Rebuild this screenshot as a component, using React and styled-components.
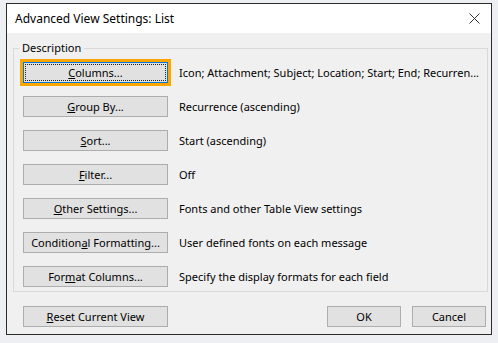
import React from 'react';
import styled, { createGlobalStyle } from 'styled-components';

const GlobalStyle = createGlobalStyle`
  body {
    margin: 0;
    background: #edeff3;
    font-family: "Noto Sans", "Open Sans", sans-serif;
    font-size: 11px;
    color: #000;
  }
`;

const rows = [
    { label: 'Columns', key: 'C', rest: 'olumns...', desc: 'Icon; Attachment; Subject; Location; Start; End; Recurren...', focused: true },
    { label: 'Group By', key: 'G', rest: 'roup By...', desc: 'Recurrence (ascending)' },
    { label: 'Sort', key: 'S', rest: 'ort...', desc: 'Start (ascending)' },
    { label: 'Filter', key: 'F', rest: 'ilter...', desc: 'Off' },
    { label: 'Other Settings', key: 'O', rest: 'ther Settings...', desc: 'Fonts and other Table View settings' },
    { label: 'Conditional Formatting', pre: 'Condition', key: 'a', rest: 'l Formatting...', desc: 'User defined fonts on each message' },
    { label: 'Format Columns', pre: 'For', key: 'm', rest: 'at Columns...', desc: 'Specify the display formats for each field' },
];

const CloseIcon = () => (
    <svg width="11" height="11" viewBox="0 0 11 11">
        <path d="M0.5 0.5 L10.5 10.5 M10.5 0.5 L0.5 10.5" stroke="#333" strokeWidth="1" fill="none" />
    </svg>
);

const App = () => {
    return (
        <Page>
            <GlobalStyle />
            <Dialog>
                <TitleBar>
                    <Title>Advanced View Settings: List</Title>
                    <CloseButton>
                        <CloseIcon />
                    </CloseButton>
                </TitleBar>
                <Body>
                    <Group>
                        <Legend>Description</Legend>
                        {rows.map(row => {
                            const label = (
                                <>
                                    {row.pre}
                                    <u>{row.key}</u>
                                    {row.rest}
                                </>
                            );
                            return (
                                <Row key={row.label}>
                                    <Button focused={row.focused}>
                                        {row.focused ? <FocusRect>{label}</FocusRect> : label}
                                    </Button>
                                    <Desc>{row.desc}</Desc>
                                </Row>
                            );
                        })}
                    </Group>
                    <Footer>
                        <Button>
                            <u>R</u>eset Current View
                        </Button>
                        <Actions>
                            <Button small>OK</Button>
                            <Button small>Cancel</Button>
                        </Actions>
                    </Footer>
                </Body>
            </Dialog>
        </Page>
    );
};

export default App;

const Page = styled.div`
  padding: 3px 0 0 6px;
`;

const Dialog = styled.div`
  width: 486px;
  height: 332px;
  box-sizing: border-box;
  border: 1px solid #2b2b2b;
  background: #f0f0f0;
  display: flex;
  flex-direction: column;
  overflow: hidden;
`;

const TitleBar = styled.div`
  height: 29px;
  flex-shrink: 0;
  background: #fff;
  display: flex;
  align-items: center;
  justify-content: space-between;
  padding: 0 8px 0 8px;
`;

const Title = styled.span`
  font-size: 12px;
  color: #000;
`;

const CloseButton = styled.div`
  width: 11px;
  height: 11px;
  margin-right: 3px;
  display: flex;
`;

const Body = styled.div`
  flex: 1;
  padding: 7px 4px 0 6px;
`;

const Group = styled.fieldset`
  margin: 0;
  width: 475px;
  min-width: 0;
  box-sizing: border-box;
  border: 1px solid #d9d9d9;
  padding: 6px 0 4px 9px;
  display: flex;
  flex-direction: column;
  gap: 13px;
`;

const Legend = styled.legend`
  margin-left: -4px;
  padding: 0 3px;
  line-height: 16px;
  font-size: 11px;
`;

const Row = styled.div`
  display: flex;
  align-items: center;
  gap: 11px;
`;

const Button = styled.div`
  width: ${p => (p.small ? '74px' : '145px')};
  height: 21px;
  box-sizing: border-box;
  background: #e1e1e1;
  border: 1px solid ${p => (p.focused ? '#0078d7' : '#adadad')};
  display: flex;
  align-items: center;
  justify-content: center;
  font-size: 11px;
  white-space: nowrap;
  outline: ${p => (p.focused ? '3px solid #ffa500' : 'none')};
  u {
    text-underline-offset: 1px;
  }
`;

const FocusRect = styled.span`
  align-self: stretch;
  flex: 1;
  margin: 1px;
  border: 1px dotted #222;
  display: flex;
  align-items: center;
  justify-content: center;
`;

const Desc = styled.span`
  font-size: 11px;
  white-space: nowrap;
`;

const Footer = styled.div`
  display: flex;
  justify-content: space-between;
  margin-top: 14px;
  padding-left: 10px;
  width: 473px;
  box-sizing: border-box;
`;

const Actions = styled.div`
  display: flex;
  gap: 11px;
`;
